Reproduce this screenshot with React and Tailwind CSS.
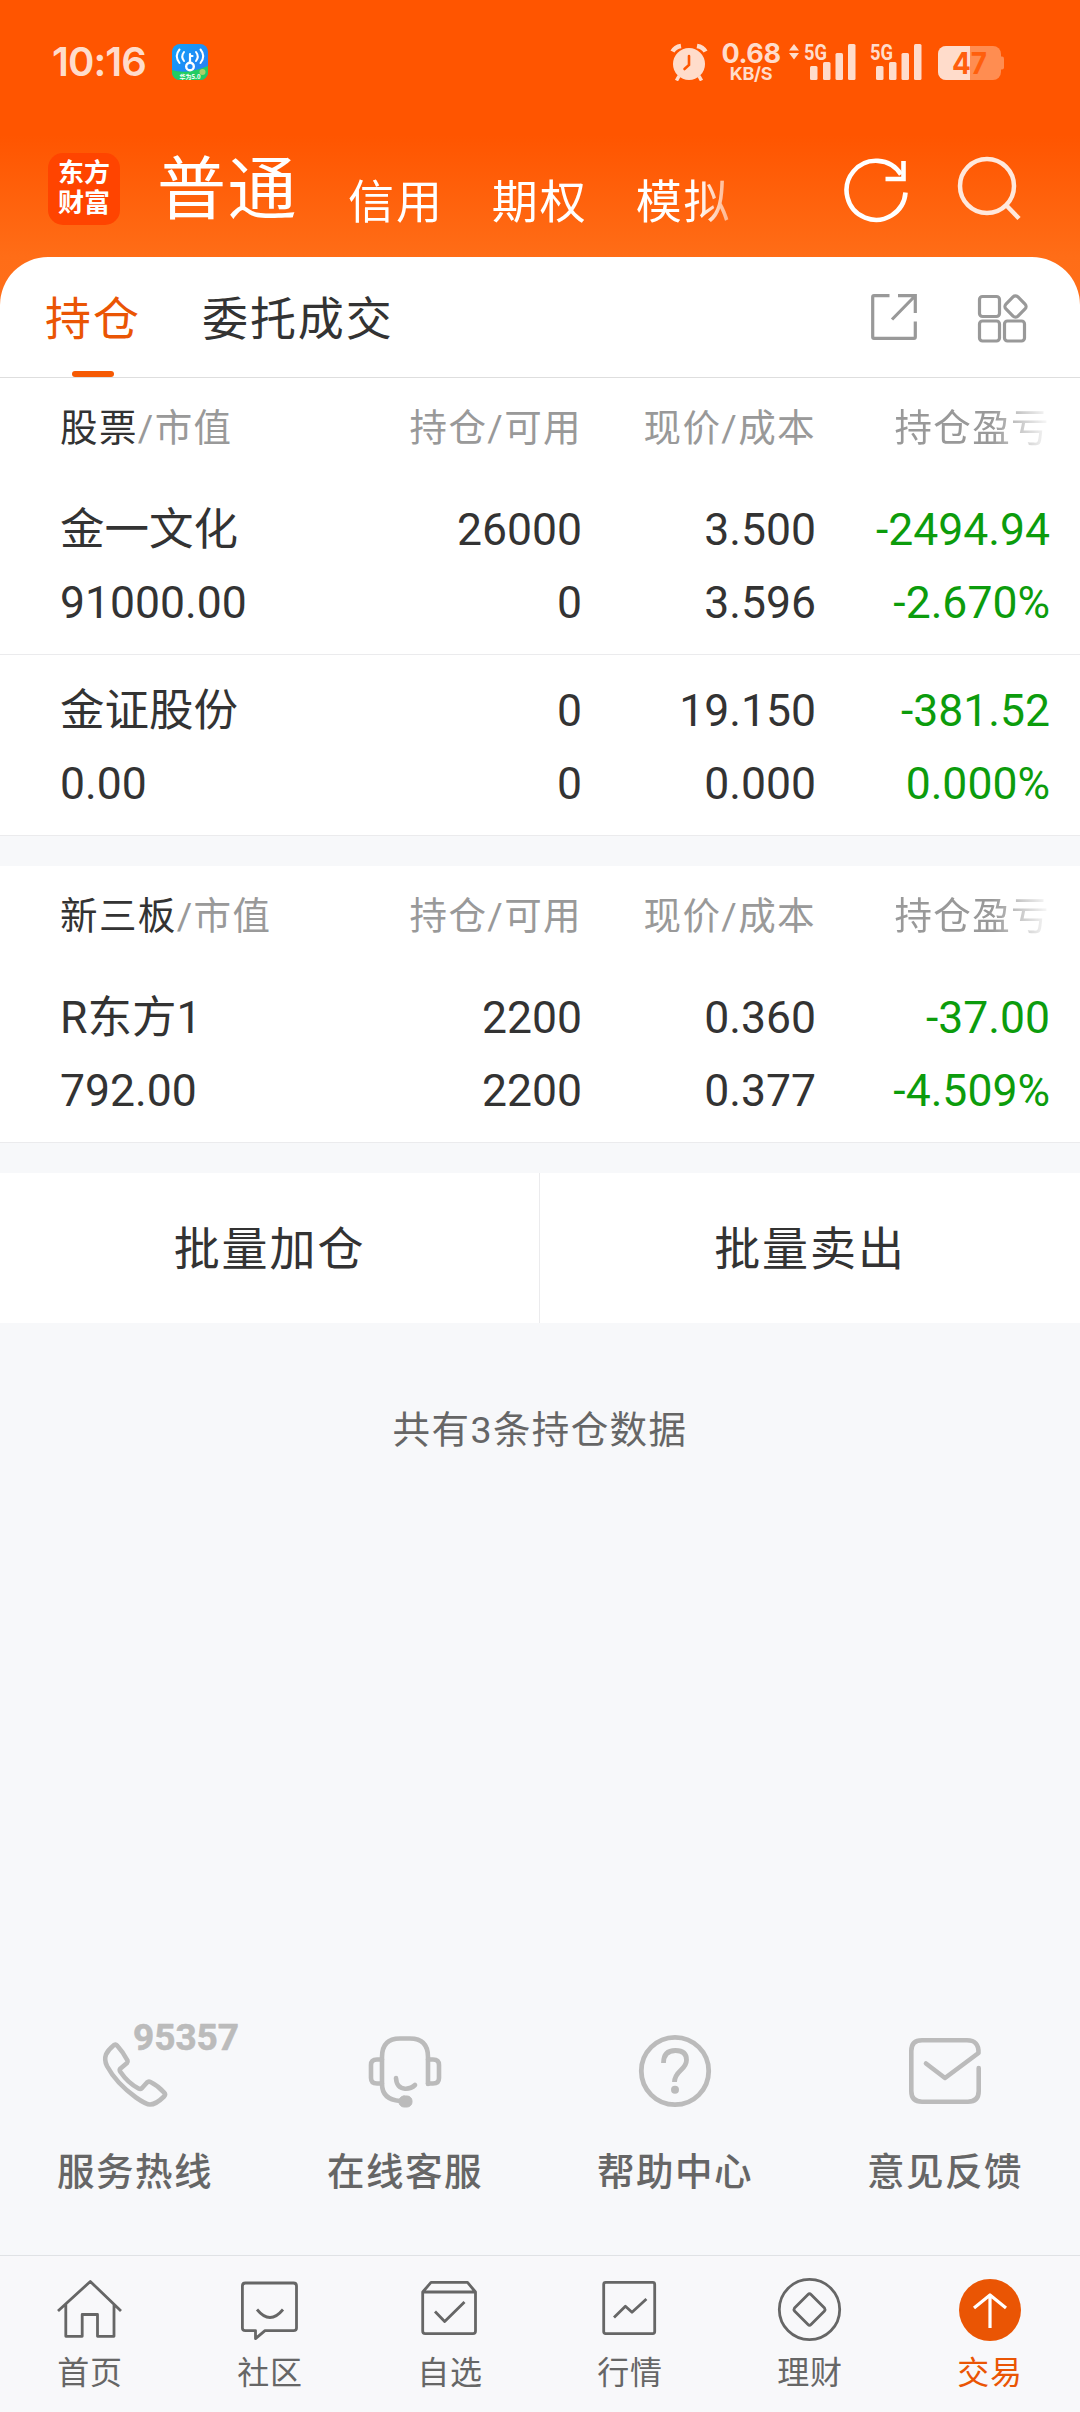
const CJK = "font-[Roboto,'Noto_Sans_CJK_SC',sans-serif]";

function WifiKeyIcon() {
  return (
    <svg className="h-9 w-9" viewBox="0 0 36 36" fill="none">
      <defs>
        <clipPath id="wk"><rect width="36" height="36" rx="8" /></clipPath>
        <linearGradient id="wkg" x1="0" y1="0" x2="1" y2="1">
          <stop stopColor="#12a0f8" />
          <stop offset="1" stopColor="#2b7bf3" />
        </linearGradient>
      </defs>
      <g clipPath="url(#wk)">
        <rect width="36" height="36" fill="url(#wkg)" />
        <path d="M0 26Q14 31 36 22V36H0Z" fill="#22cc62" />
        <circle cx="30.500" cy="28" r="3" fill="#a9d06a" />
        <g stroke="#fff" strokeLinecap="round">
          <circle cx="18" cy="22.500" r="3.800" strokeWidth="2.400" />
          <path d="M18 18V10M18 12H20.500" strokeWidth="2.200" />
          <path d="M12 8Q8.500 12.500 12 17M24 8Q27.500 12.500 24 17M7.500 5.500Q2 12 7.500 19M28.500 5.500Q34 12 28.500 19" strokeWidth="2" />
        </g>
        <text x="18" y="34.500" textAnchor="middle" fontSize="6" fontWeight="700" fill="#fff" fontFamily="Noto Sans CJK SC">华为5.0</text>
      </g>
    </svg>
  );
}

function AlarmIcon() {
  return (
    <svg className="h-[38px] w-[38px]" viewBox="0 0 38 38" fill="none">
      <path d="M2.500 8.500Q5 4 11 3M35.500 8.500Q33 4 27 3" stroke="#ffdccb" strokeWidth="4.500" />
      <circle cx="19" cy="21" r="16" fill="#ffdccb" />
      <path d="M9 33L6.500 37.500M29 33L31.500 37.500" stroke="#ffdccb" strokeWidth="3.500" />
      <path d="M19 13V22L14.500 26" stroke="#ff5500" strokeWidth="2.600" strokeLinecap="round" />
    </svg>
  );
}

function Signal() {
  return (
    <svg className="h-[38px] w-[54px] overflow-visible" viewBox="0 0 54 38" fill="#ffdccb">
      <text x="0" y="16.500" fontSize="22" fontWeight="700" fontFamily="Roboto" textLength="23" lengthAdjust="spacingAndGlyphs">5G</text>
      <rect x="6" y="23" width="7.500" height="14" rx="1.500" />
      <rect x="19" y="19" width="7.500" height="18" rx="1.500" />
      <rect x="31.500" y="10" width="7.500" height="27" rx="1.500" />
      <rect x="44" y="1" width="7.500" height="36" rx="1.500" />
    </svg>
  );
}

function Battery() {
  return (
    <svg className="h-[34px] w-[66px]" viewBox="0 0 66 34">
      <defs>
        <clipPath id="bl"><rect width="32" height="34" /></clipPath>
      </defs>
      <path d="M62 10.500H64Q66 10.500 66 12.500V21.500Q66 23.500 64 23.500H62Z" fill="#ff8d51" />
      <rect width="63" height="34" rx="8" fill="#ff8d51" />
      <rect width="63" height="34" rx="8" fill="#ffdccb" clipPath="url(#bl)" />
      <text x="31.500" y="28" textAnchor="middle" fontSize="30" fontWeight="700" fontFamily="Inter" fill="#ff5f0d" textLength="35" lengthAdjust="spacingAndGlyphs">47</text>
    </svg>
  );
}

function StatusBar() {
  return (
    <div className="flex h-[124px] items-start pr-[76px] pl-[52px] pt-[43px] text-[#ffdccb]">
      <div className="w-[120px] pt-[1px] font-[Inter] text-[40px] leading-[36px] font-semibold tracking-[-0.9px]">10:16</div>
      <div className="pt-[1px]"><WifiKeyIcon /></div>
      <div className="ml-auto flex items-start">
        <AlarmIcon />
        <div className="ml-[13px] w-[60px] text-center font-[Inter]">
          <div className="text-[27px] leading-[22px] font-bold tracking-[-0.4px]">0.68</div>
          <div className="text-[18px] leading-[17px] font-bold tracking-[-0.3px]">KB/S</div>
        </div>
        <svg className="mt-[1px] ml-[7px] h-[16px] w-[12px]" viewBox="0 0 12 16" fill="#ffdccb">
          <path d="M6 0L11 6.500H1ZM6 15.500L11 9H1Z" />
        </svg>
        <div className="ml-[4px]"><Signal /></div>
        <div className="ml-[12px]"><Signal /></div>
        <div className="ml-[14px] pt-[3px]"><Battery /></div>
      </div>
    </div>
  );
}

function TopTabs() {
  return (
    <div className="flex h-[133px] pl-12 text-white">
      <div className="mt-[29px] flex h-[72px] w-[72px] flex-col items-center justify-center rounded-[15px] bg-[#ff4400] pb-[2px] text-[26px] leading-[30px] font-bold">
        <span>东方</span>
        <span>财富</span>
      </div>
      <div className="ml-[37px] flex mask-[linear-gradient(to_right,#000_540px,transparent_605px)]">
        <span className="text-[69px] leading-[134px] tracking-[1.500px]">普通</span>
        <div className="flex gap-[48px] pt-[30px] pl-[50px] text-[46px] leading-[96px] tracking-[1.9px]">
          <span>信用</span>
          <span>期权</span>
          <span>模拟</span>
        </div>
      </div>
      <svg className="mt-[31px] ml-auto h-[70px] w-[70px]" viewBox="0 0 70 70" fill="none" stroke="#fff" strokeWidth="4.600">
        <path d="M64.500 37.500A29.500 29.500 0 1 1 60 19.500" />
        <path d="M62.500 6V24H44.500" />
      </svg>
      <svg className="mt-[32px] mr-[53px] ml-[46px] h-[70px] w-[70px]" viewBox="0 0 70 70" fill="none" stroke="#ffe8dc" strokeWidth="4.500">
        <circle cx="30" cy="30" r="27" />
        <path d="M49 49L62 62.500" />
      </svg>
    </div>
  );
}

function SubTabs() {
  return (
    <div className="flex h-[121px] rounded-t-[48px] border-b border-[#dedede] bg-white pl-[45px] text-[46px] leading-[124px] tracking-[1.9px]">
      <div className="flex w-[96px] flex-col items-center text-[#ea5504]">
        <span className="h-[114px]">持仓</span>
        <span className="h-[6px] w-[42px] rounded-full bg-[#f65a04]" />
      </div>
      <span className="ml-[61px] text-[#333]">委托成交</span>
      <svg className="mt-[35px] mr-[57px] ml-auto h-[50px] w-[50px]" viewBox="0 0 50 50" fill="none" stroke="#999" strokeWidth="3.200">
        <path d="M20.500 3.700H5Q3.700 3.700 3.700 5V45Q3.700 46.300 5 46.300H45Q46.300 46.300 46.300 45V29.500" />
        <path d="M29 3.700H46.300V21M45.500 4.500L23 27.500" />
      </svg>
      <svg className="mt-[35px] mr-[52px] h-[52px] w-[52px]" viewBox="0 0 52 52" fill="none" stroke="#999" strokeWidth="3.200">
        <rect x="3.500" y="4.500" width="20" height="20" rx="3" />
        <rect x="3.500" y="29" width="20" height="20" rx="3" />
        <rect x="28.500" y="29" width="20" height="20" rx="3" />
        <rect x="31" y="6" width="17" height="17" rx="3.500" transform="rotate(45 39.500 14.500)" />
      </svg>
    </div>
  );
}

const COLS = "grid grid-cols-[292px_230px_234px_234px] pl-[60px]";

function Section({ name, rows }) {
  return (
    <section className="bg-white">
      <div className={COLS + " h-[96px] text-[37.5px] leading-[100px] tracking-[1.4px] text-[#999]"}>
        <span><span className="text-[#333]">{name}</span>/市值</span>
        <span className="text-right">持仓/可用</span>
        <span className="text-right">现价/成本</span>
        <span className="mask-[linear-gradient(to_right,#000_176px,transparent_236px)] text-right">持仓盈亏</span>
      </div>
      {rows.map((r) => (
        <div key={r[0]} className="h-[181px] border-b border-[#ebebed] pt-[20px] text-[44.5px] leading-[73px] text-[#333]">
          <div className={COLS}>
            <span>{r[0]}</span>
            <span className="text-right">{r[2]}</span>
            <span className="text-right">{r[4]}</span>
            <span className="text-right text-[#0c9c0c]">{r[6]}</span>
          </div>
          <div className={COLS}>
            <span>{r[1]}</span>
            <span className="text-right">{r[3]}</span>
            <span className="text-right">{r[5]}</span>
            <span className="text-right text-[#0c9c0c]">{r[7]}</span>
          </div>
        </div>
      ))}
    </section>
  );
}

const SERVICES = [
  ["服务热线", (
    <svg className="h-[76px] w-[76px] overflow-visible" viewBox="97 2033 76 76" fill="none" stroke="#bbb" strokeWidth="4.600" strokeLinejoin="round">
      <path d="M113.500 2045.500Q115.500 2043.500 117.500 2046Q123 2052 127.500 2060.500Q128 2062 127 2063L120.500 2068.500Q119 2070 120.500 2072Q128 2083 138.500 2088.500Q140.500 2089.500 142 2088L147 2082.500Q148.500 2081 150.500 2082Q158.500 2086 164 2092.500Q166 2094.500 164 2096.500Q156 2104.500 150 2104.500Q146 2104.500 136 2097.500Q116 2083 107 2066Q104 2060 106 2054.500Q108 2050 113.500 2045.500Z" />
      <text x="133" y="2050" fontSize="37.500" fontWeight="700" fontFamily="Roboto" strokeWidth="0.600" fill="#bbb" textLength="106" lengthAdjust="spacingAndGlyphs">95357</text>
    </svg>
  )],
  ["在线客服", (
    <svg className="h-[76px] w-[76px]" viewBox="367 2033 76 76" fill="none" stroke="#bbb" strokeWidth="4.600" strokeLinecap="round">
      <path d="M428 2084V2057Q428 2038.500 410 2038.500H400Q382 2038.500 382 2057V2084Q382 2099.500 400 2101" />
      <path d="M382 2059.500H377Q371 2059.500 371 2065V2078Q371 2083.500 377 2083.500H382M428 2059.500H433Q439 2059.500 439 2065V2078Q439 2083.500 433 2083.500H428" />
      <path d="M396 2078Q396.500 2088 405 2088.700Q411 2089 415 2085" />
      <rect x="399" y="2096" width="13" height="11" rx="5" fill="#bbb" strokeWidth="1" />
    </svg>
  )],
  ["帮助中心", (
    <svg className="h-[76px] w-[76px]" viewBox="637 2033 76 76" fill="none" stroke="#bbb" strokeWidth="4.800">
      <circle cx="675" cy="2071" r="33.700" />
      <path d="M663.500 2063Q663.500 2050.500 675.500 2050.500Q686.500 2050.500 686.500 2060Q686.500 2065 681 2070Q674.500 2076 674.500 2082" />
      <circle cx="675" cy="2089.700" r="4" fill="#bbb" stroke="none" />
    </svg>
  )],
  ["意见反馈", (
    <svg className="h-[76px] w-[76px]" viewBox="907 2033 76 76" fill="none" stroke="#bbb" strokeWidth="4.600" strokeLinecap="round" strokeLinejoin="round">
      <path d="M926 2063.500L945 2078L978.500 2053Q979 2040.300 967 2040.300H922Q911.300 2040.300 911.300 2051V2091Q911.300 2101.700 922 2101.700H968Q978.700 2101.700 978.700 2091V2068" />
    </svg>
  )],
];

const NAV = [
  ["首页", (
    <path d="M-32 -8L0.300 -37.500L31 -8M-24.200 -15V17.300H-7.800V-4.500H7.500V17.300H24V-15" />
  )],
  ["社区", (
    <g>
      <path d="M-24.600 -36H23.500Q26.500 -36 26.500 -33V9Q26.500 11.600 23.500 11.600H-5L-14.500 19.600V11.600H-24.600Q-27.600 11.600 -27.600 9V-33Q-27.600 -36 -24.600 -36Z" />
      <path d="M-13 -9.500Q0 6.500 13 -9.500" />
    </g>
  )],
  ["自选", (
    <g>
      <path d="M-27.300 -27L-19 -36.600H17.500L25.500 -27V12Q25.500 14.600 23 14.600H-24.800Q-27.300 14.600 -27.300 12ZM-27.300 -27H25.500" />
      <path d="M-15 -7.500L-5.300 2.500L14.500 -17" />
    </g>
  )],
  ["行情", (
    <g>
      <rect x="-26.300" y="-36.600" width="51" height="51.200" rx="2" />
      <path d="M-16 -1.500L-4.600 -12.800L2 -6.800L16.400 -20" />
    </g>
  )],
  ["理财", (
    <g>
      <circle cx="-0.500" cy="-9.500" r="30.200" />
      <path d="M-2 -24.500Q-0.500 -26 1 -24.500L14.500 -11Q15.500 -9.500 14.500 -8L1 5.500Q-0.500 7 -2 5.500L-15.500 -8Q-16.500 -9.500 -15.500 -11Z" />
    </g>
  )],
  ["交易", (
    <g>
      <circle cy="-9" r="31" fill="#ea5504" stroke="none" />
      <path d="M0 9V-24M-16 -11L0 -24L16 -11" stroke="#fff" strokeWidth="3.200" />
    </g>
  )],
];

export default function App() {
  return (
    <div className={CJK + " flex h-[2412px] w-[1080px] flex-col overflow-hidden bg-[#f7f8fa] whitespace-nowrap"}>
      <header className="bg-[linear-gradient(to_bottom,#ff5500_0px,#ff5500_135px,#ff6d17_257px,#ff6f1a_305px)]">
        <StatusBar />
        <TopTabs />
        <SubTabs />
      </header>
      <Section
        name="股票"
        rows={[
          ["金一文化", "91000.00", "26000", "0", "3.500", "3.596", "-2494.94", "-2.670%"],
          ["金证股份", "0.00", "0", "0", "19.150", "0.000", "-381.52", "0.000%"],
        ]}
      />
      <div className="h-[30px] shrink-0" />
      <Section
        name="新三板"
        rows={[["R东方1", "792.00", "2200", "2200", "0.360", "0.377", "-37.00", "-4.509%"]]}
      />
      <div className="mt-[30px] flex h-[150px] bg-white text-center text-[46px] leading-[153px] tracking-[1.9px] text-[#333]">
        <div className="w-[540px] border-r border-[#ebebed]">批量加仓</div>
        <div className="w-[540px]">批量卖出</div>
      </div>
      <p className="mt-[77px] text-center text-[37.5px] leading-[60px] tracking-[1.4px] text-[#666]">共有3条持仓数据</p>
      <div className="mt-auto grid h-[222px] grid-cols-4">
        {SERVICES.map(([label, icon]) => (
          <div key={label} className="flex flex-col items-center">
            {icon}
            <span className="mt-[33px] text-[37.5px] leading-[60px] font-medium tracking-[1.5px] text-[#666]">{label}</span>
          </div>
        ))}
      </div>
      <nav className="grid h-[157px] grid-cols-6 border-t border-[#e0e2e5] bg-[#f8f8fa]">
        {NAV.map(([label, icon], i) => (
          <div key={label} className={"flex flex-col items-center " + (i === 5 ? "text-[#ea5504]" : "text-[#666]")}>
            <svg className="mt-[20px] h-[70px] w-[70px]" viewBox="-35 -43 70 70" fill="none" stroke="currentColor" strokeWidth="2.800" strokeLinejoin="round">{icon}</svg>
            <span className="mt-[7px] text-[32px] leading-[40px] tracking-[0.8px]">{label}</span>
          </div>
        ))}
      </nav>
    </div>
  );
}
